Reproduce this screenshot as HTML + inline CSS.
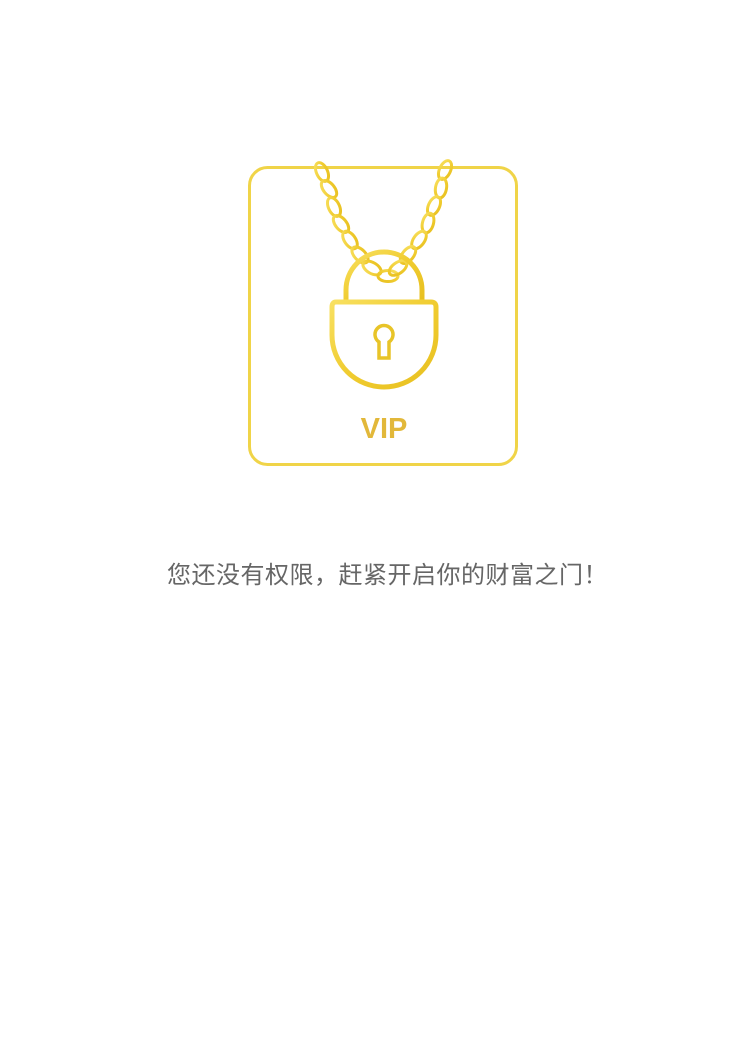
<!DOCTYPE html>
<html><head><meta charset="utf-8"><style>
html,body{margin:0;padding:0;background:#fff;width:750px;height:1058px;overflow:hidden}
.t{position:absolute;left:167px;top:555px;white-space:nowrap;font:24px "Liberation Sans","Noto Sans CJK SC",sans-serif;color:#666;letter-spacing:0.5px}
</style></head><body>
<svg width="750" height="600" style="position:absolute;left:0;top:0">
<defs><linearGradient id="g" x1="0" y1="0" x2="1" y2="1"><stop offset="0" stop-color="#f8e060"/><stop offset=".5" stop-color="#f0cc30"/><stop offset="1" stop-color="#e8c020"/></linearGradient></defs>
<rect x="249.5" y="167.5" width="267" height="297" rx="18" fill="none" stroke="#f0d448" stroke-width="3"/>
<g fill="none" stroke="url(#g)" stroke-width="3">
<ellipse cx="322" cy="172" rx="5.5" ry="10" transform="rotate(-25 322 172)"/>
<ellipse cx="329" cy="189" rx="5.5" ry="10" transform="rotate(-40 329 189)"/>
<ellipse cx="334" cy="207" rx="5.5" ry="10" transform="rotate(-25 334 207)"/>
<ellipse cx="341" cy="224" rx="5.5" ry="10" transform="rotate(-40 341 224)"/>
<ellipse cx="350" cy="240" rx="5.5" ry="10" transform="rotate(-35 350 240)"/>
<ellipse cx="360" cy="255" rx="5.5" ry="10" transform="rotate(-45 360 255)"/>
<ellipse cx="372" cy="268" rx="5.5" ry="10" transform="rotate(-60 372 268)"/>
<ellipse cx="388" cy="276" rx="5.5" ry="10" transform="rotate(90 388 276)"/>
<ellipse cx="445" cy="170" rx="5.5" ry="10" transform="rotate(25 445 170)"/>
<ellipse cx="441" cy="188" rx="5.5" ry="10" transform="rotate(10 441 188)"/>
<ellipse cx="434" cy="206" rx="5.5" ry="10" transform="rotate(25 434 206)"/>
<ellipse cx="428" cy="223" rx="5.5" ry="10" transform="rotate(15 428 223)"/>
<ellipse cx="419" cy="240" rx="5.5" ry="10" transform="rotate(35 419 240)"/>
<ellipse cx="408" cy="255" rx="5.5" ry="10" transform="rotate(40 408 255)"/>
<ellipse cx="398" cy="268" rx="5.5" ry="10" transform="rotate(55 398 268)"/>
</g>
<path d="M346 300 V290 A38 38 0 0 1 422 290 V300" fill="none" stroke="url(#g)" stroke-width="5"/>
<path d="M336 302 H431 Q436 302 436 307 V335 A52 52 0 0 1 332 335 V307 Q332 302 336 302 Z" fill="none" stroke="url(#g)" stroke-width="5"/>
<path d="M379 342 A9 9 0 1 1 389 342 V358 H379 Z" fill="none" stroke="#e8c428" stroke-width="3.5"/>
<text x="384" y="438" text-anchor="middle" font-family="Liberation Sans,sans-serif" font-weight="bold" font-size="29" fill="#e2b83a">VIP</text>
</svg>
<div class="t">您还没有权限，赶紧开启你的财富之门！</div>
</body></html>
